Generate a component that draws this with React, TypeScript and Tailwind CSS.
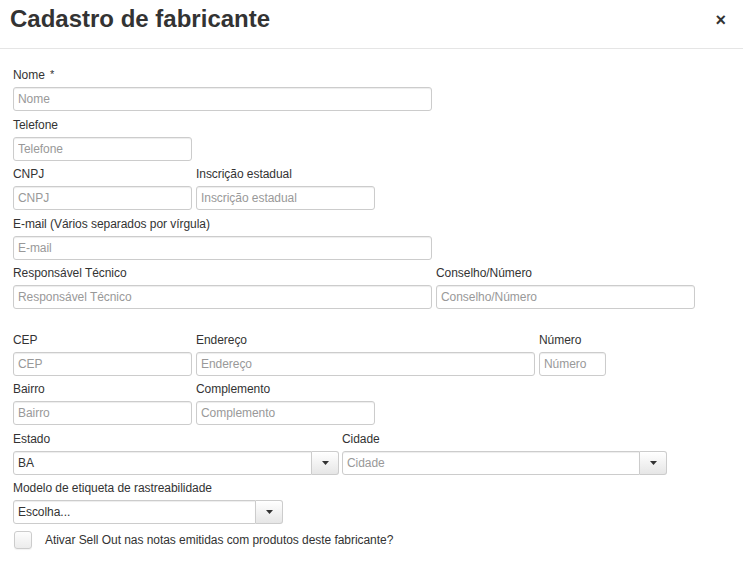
import { ReactNode } from "react";

const font = { fontFamily: '"Liberation Sans", Arial, sans-serif' };

const inputCls =
  "h-[24px] w-full rounded-[3px] border border-[#ccc] bg-white px-[4px] text-[12px] text-[#333] shadow-[inset_0_1px_1px_rgba(0,0,0,0.075)] outline-none placeholder:text-[#999]";

function Caret() {
  return (
    <svg width="7" height="4" viewBox="0 0 7 4" className="block">
      <path d="M0 0h7L3.5 4z" fill="#333" />
    </svg>
  );
}

function Field({ label, width, children }: { label: ReactNode; width: string; children: ReactNode }) {
  return (
    <div className={`flex flex-col ${width}`}>
      <label className="h-[21px] leading-[19px] text-[12px] text-[#333] whitespace-nowrap">{label}</label>
      {children}
    </div>
  );
}

function TextField({ label, placeholder, width }: { label: string; placeholder?: string; width: string }) {
  return (
    <Field label={label} width={width}>
      <input placeholder={placeholder ?? label} className={inputCls} style={font} />
    </Field>
  );
}

function Select({ value, placeholder }: { value?: string; placeholder?: string }) {
  return (
    <div className="flex h-[24px] w-full">
      <div className="flex flex-1 items-center rounded-l-[3px] border border-[#ccc] bg-white px-[4px] text-[12px] shadow-[inset_0_1px_1px_rgba(0,0,0,0.075)]">
        {value ? <span className="text-[#333]">{value}</span> : <span className="text-[#999]">{placeholder}</span>}
      </div>
      <div className="flex w-[27px] items-center justify-center rounded-r-[3px] border border-l-0 border-[#ccc] bg-gradient-to-b from-white to-[#e6e6e6]">
        <Caret />
      </div>
    </div>
  );
}

export default function App() {
  return (
    <div className="w-[743px] h-[569px] bg-white overflow-hidden tracking-[-0.05px]" style={font}>
      <div className="flex h-[49px] items-start justify-between border-b border-[#e5e5e5] pl-[10px] pr-[17px]">
        <h1 className="pt-[5px] text-[24px] font-bold leading-[28px] tracking-normal text-[#333]">Cadastro de fabricante</h1>
        <button className="pt-[9px] text-[18px] font-bold leading-[22px] text-[#333]">×</button>
      </div>

      <div className="flex flex-col gap-[4.5px] px-[13px] pt-[17px]">
        <div className="flex">
          <Field
            label={
              <>
                Nome <span className="ml-[2px] align-top text-[11px] leading-[17px]">*</span>
              </>
            }
            width="w-[419px]"
          >
            <input placeholder="Nome" className={inputCls} style={font} />
          </Field>
        </div>
        <div className="flex">
          <TextField label="Telefone" width="w-[179px]" />
        </div>
        <div className="flex gap-[4px]">
          <TextField label="CNPJ" width="w-[179px]" />
          <TextField label="Inscrição estadual" width="w-[179px]" />
        </div>
        <div className="flex">
          <TextField label="E-mail (Vários separados por vírgula)" placeholder="E-mail" width="w-[419px]" />
        </div>
        <div className="flex gap-[4px]">
          <TextField label="Responsável Técnico" width="w-[419px]" />
          <TextField label="Conselho/Número" width="w-[259px]" />
        </div>

        <div className="mt-[17px] flex gap-[4px]">
          <TextField label="CEP" width="w-[179px]" />
          <TextField label="Endereço" width="w-[339px]" />
          <TextField label="Número" width="w-[67px]" />
        </div>
        <div className="flex gap-[4px]">
          <TextField label="Bairro" width="w-[179px]" />
          <TextField label="Complemento" width="w-[179px]" />
        </div>
        <div className="flex gap-[3px]">
          <Field label="Estado" width="w-[326px]">
            <Select value="BA" />
          </Field>
          <Field label="Cidade" width="w-[325px]">
            <Select placeholder="Cidade" />
          </Field>
        </div>
        <div className="flex">
          <Field label="Modelo de etiqueta de rastreabilidade" width="w-[270px]">
            <Select value="Escolha..." />
          </Field>
        </div>

        <label className="mt-[2px] flex items-center gap-[13px] pl-[1px]">
          <span className="h-[18px] w-[18px] rounded-[3px] border border-[#ccc] bg-gradient-to-b from-[#fdfdfd] to-[#ececec] shadow-[0_1px_1px_rgba(0,0,0,0.05)]" />
          <span className="text-[12px] text-[#333]">Ativar Sell Out nas notas emitidas com produtos deste fabricante?</span>
        </label>
      </div>
    </div>
  );
}
